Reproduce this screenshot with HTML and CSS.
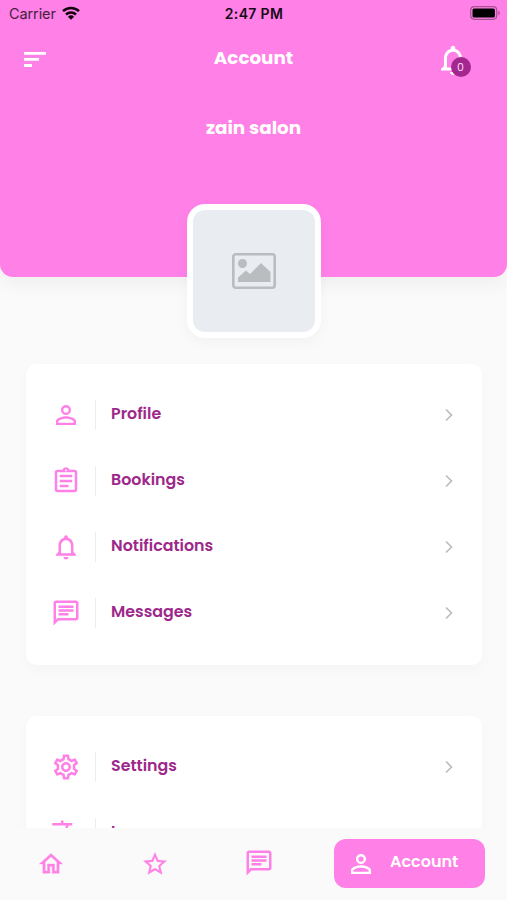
FILE: index.html
```html
<!DOCTYPE html>
<html lang="en">
<head>
<meta charset="utf-8">
<title>Account</title>
<link rel="stylesheet" href="styles.css">
</head>
<body>
<svg class="defs" aria-hidden="true">
  <symbol id="person" viewBox="0 0 24 24"><path d="M12 5.9a2.1 2.1 0 1 1 0 4.2 2.1 2.1 0 0 1 0-4.2m0 9c2.97 0 6.1 1.46 6.1 2.1v1.1H5.9V17c0-.64 3.13-2.1 6.1-2.1M12 4C9.79 4 8 5.79 8 8s1.79 4 4 4 4-1.79 4-4-1.79-4-4-4zm0 9c-2.67 0-8 1.34-8 4v3h16v-3c0-2.66-5.33-4-8-4z"/></symbol>
  <symbol id="clipboard" viewBox="0 0 24 24"><path d="M7 15h7v2H7zm0-4h10v2H7zm0-4h10v2H7zm12-4h-4.18C14.4 1.84 13.3 1 12 1s-2.4.84-2.82 2H5c-1.1 0-2 .9-2 2v14c0 1.1.9 2 2 2h14c1.100 0 2-.9 2-2V5c0-1.100-.9-2-2-2zm-7-.25c.41 0 .75.34.75.75s-.34.75-.75.75-.75-.34-.75-.75.34-.75.75-.75zM19 19H5V5h14v14z"/></symbol>
  <symbol id="bell" viewBox="0 0 24 24"><path d="M12 22c1.100 0 2-.9 2-2h-4c0 1.100.9 2 2 2zm6-6v-5c0-3.070-1.630-5.640-4.500-6.320V4c0-.83-.67-1.500-1.500-1.500s-1.500.67-1.500 1.500v.68C7.640 5.360 6 7.920 6 11v5l-2 2v1h16v-1l-2-2zm-2 1H8v-6c0-2.480 1.510-4.500 4-4.500s4 2.020 4 4.500v6z"/></symbol>
  <symbol id="chat" viewBox="0 0 24 24"><path d="M4 4h16v12H5.170L4 17.170V4m0-2c-1.100 0-1.990.9-1.990 2L2 22l4-4h14c1.100 0 2-.9 2-2V4c0-1.100-.9-2-2-2H4zm2 10h8v2H6v-2zm0-3h12v2H6V9zm0-3h12v2H6V6z"/></symbol>
  <symbol id="gear" viewBox="0 0 24 24"><path d="M19.430 12.980c.04-.32.070-.64.070-.98s-.03-.66-.070-.98l2.110-1.650c.19-.15.240-.42.120-.64l-2-3.460c-.09-.16-.26-.25-.44-.25-.06 0-.12.010-.17.030l-2.490 1c-.52-.4-1.080-.73-1.690-.98l-.38-2.650C14.460 2.180 14.250 2 14 2h-4c-.25 0-.46.18-.49.42l-.38 2.650c-.61.25-1.170.59-1.690.98l-2.490-1c-.06-.02-.12-.03-.18-.03-.17 0-.34.09-.43.25l-2 3.460c-.13.22-.07.49.12.64l2.110 1.650c-.04.32-.07.65-.07.98s.03.66.07.98l-2.110 1.650c-.19.15-.24.42-.12.64l2 3.460c.09.16.26.25.44.25.06 0 .12-.01.17-.03l2.490-1c.52.4 1.080.73 1.690.98l.38 2.650c.03.24.24.42.49.42h4c.25 0 .46-.18.49-.42l.38-2.650c.61-.25 1.170-.59 1.690-.98l2.490 1c.06.02.12.03.18.03.17 0 .34-.09.43-.25l2-3.460c.12-.22.07-.49-.12-.64l-2.110-1.650zm-1.980-1.710c.04.31.05.52.05.73 0 .21-.02.43-.05.73l-.14 1.130.89.7 1.080.84-.7 1.210-1.270-.51-1.040-.42-.9.68c-.43.32-.84.56-1.250.73l-1.060.43-.16 1.130-.2 1.350h-1.400l-.19-1.350-.16-1.130-1.060-.43c-.43-.18-.83-.41-1.230-.71l-.91-.7-1.060.43-1.270.51-.7-1.210 1.080-.84.89-.7-.14-1.130c-.03-.31-.05-.54-.05-.74s.02-.43.05-.73l.14-1.130-.89-.7-1.080-.84.7-1.210 1.270.51 1.040.42.9-.68c.43-.32.84-.56 1.250-.73l1.060-.43.16-1.130.2-1.350h1.390l.19 1.350.16 1.130 1.060.43c.43.18.83.41 1.230.71l.91.7 1.060-.43 1.270-.51.7 1.210-1.070.85-.89.7.14 1.130zM12 8c-2.210 0-4 1.790-4 4s1.790 4 4 4 4-1.790 4-4-1.790-4-4-4zm0 6c-1.100 0-2-.9-2-2s.9-2 2-2 2 .9 2 2-.9 2-2 2z"/></symbol>
  <symbol id="translate" viewBox="0 0 24 24"><path d="M12.870 15.070l-2.540-2.510.03-.03c1.740-1.940 2.980-4.170 3.710-6.530H17V4h-7V2H8v2H1v1.990h11.170C11.500 7.920 10.440 9.750 9 11.350 8.070 10.320 7.300 9.190 6.690 8h-2c.73 1.630 1.730 3.170 2.980 4.560l-5.090 5.020L4 19l5-5 3.110 3.110.76-2.040zM18.500 10h-2L12 22h2l1.120-3h4.750L21 22h2l-4.500-12zm-2.620 7l1.620-4.330L19.120 17h-3.240z"/></symbol>
  <symbol id="home" viewBox="0 0 24 24"><path d="M12 5.690l5 4.500V18h-2v-6H9v6H7v-7.810l5-4.500M12 3L2 12h3v8h6v-6h2v6h6v-8h3L12 3z"/></symbol>
  <symbol id="star" viewBox="0 0 24 24"><path d="M22 9.240l-7.190-.62L12 2 9.190 8.630 2 9.240l5.460 4.730L5.820 21 12 17.270 18.180 21l-1.630-7.030L22 9.240zM12 15.400l-3.760 2.270 1-4.280-3.320-2.880 4.380-.38L12 6.100l1.710 4.040 4.380.38-3.320 2.880 1 4.280L12 15.400z"/></symbol>
  <symbol id="chevron" viewBox="0 0 8 14"><path d="M1 1.500 6.500 7 1 12.500" fill="none" stroke="currentColor" stroke-width="1.700"/></symbol>
</svg>
<div class="screen">
  <header class="hero">
    <div class="status">
      <div class="carrier"><span>Carrier</span>
        <svg class="wifi" viewBox="0 0 18 14"><path d="M1 5.200a11.500 11.500 0 0 1 16 0M4 8.500a7.200 7.200 0 0 1 10 0" fill="none" stroke="currentColor" stroke-width="2.500"/><path d="M9 13.700 5.900 10.700a4.500 4.500 0 0 1 6.200 0z" fill="currentColor"/></svg>
      </div>
      <span class="time">2:47 PM</span>
      <svg class="battery" viewBox="0 0 31 14"><rect x=".7" y=".7" width="26" height="12.600" rx="3.500" fill="none" stroke="#a65390" stroke-width="1.200"/><rect x="2.500" y="2.500" width="22.400" height="9" rx="1.500"/><path d="M28.300 4.800v4.400c2-.8 2-3.600 0-4.400z" fill="#a65390"/></svg>
    </div>
    <div class="bar">
      <svg class="menu" viewBox="0 0 22 15"><path d="M0 0h22v2.800H0zM0 6h15v2.800H0zM0 12.100h8v2.800H0z"/></svg>
      <h1 class="title">Account</h1>
      <div class="alerts"><svg><use href="#bell"/></svg><span class="badge">0</span></div>
    </div>
    <h2 class="name">zain salon</h2>
    <div class="avatar"><div class="photo">
      <svg viewBox="0 0 44 36"><rect x="1.300" y="1.300" width="41.400" height="33.400" rx="2.500" fill="none" stroke="#b9bdbf" stroke-width="2.600"/><circle cx="10.500" cy="10.500" r="4.500" fill="#b9bdbf"/><path d="M6 29v-4.500l8-7 4 3.500 11-11 9.500 9V29z" fill="#b9bdbf"/></svg>
    </div></div>
  </header>
  <main class="content">
    <section class="card">
      <div class="row"><svg class="icon"><use href="#person"/></svg><span class="label">Profile</span><svg class="chev"><use href="#chevron"/></svg></div>
      <div class="row"><svg class="icon"><use href="#clipboard"/></svg><span class="label">Bookings</span><svg class="chev"><use href="#chevron"/></svg></div>
      <div class="row"><svg class="icon"><use href="#bell"/></svg><span class="label">Notifications</span><svg class="chev"><use href="#chevron"/></svg></div>
      <div class="row"><svg class="icon"><use href="#chat"/></svg><span class="label">Messages</span><svg class="chev"><use href="#chevron"/></svg></div>
    </section>
    <section class="card">
      <div class="row"><svg class="icon"><use href="#gear"/></svg><span class="label">Settings</span><svg class="chev"><use href="#chevron"/></svg></div>
      <div class="row"><svg class="icon"><use href="#translate"/></svg><span class="label">Languages</span></div>
    </section>
  </main>
  <nav class="tabs">
    <svg class="tab home"><use href="#home"/></svg>
    <svg class="tab star"><use href="#star"/></svg>
    <svg class="tab"><use href="#chat"/></svg>
    <div class="active"><svg class="tab"><use href="#person"/></svg><span>Account</span></div>
  </nav>
</div>
</body>
</html>
```

FILE: styles.css
```css
* { box-sizing: border-box; }
body { margin: 0; font-family: Poppins, Inter, sans-serif; }
svg { display: block; fill: currentColor; flex: none; }
.defs { position: absolute; width: 0; height: 0; }
.screen { display: flex; flex-direction: column; width: 507px; height: 900px; overflow: hidden; background: #fafafa; }
.hero { flex: none; height: 277px; background: #ff80e6; border-radius: 0 0 13px 13px; box-shadow: 0 8px 18px rgba(0, 0, 0, .045); color: #fff; display: flex; flex-direction: column; align-items: center; }
.status { flex: none; width: 100%; height: 28px; display: grid; grid-template-columns: 1fr auto 1fr; align-items: center; padding: 0 6px 2px 9px; color: #170b15; font-family: Inter, sans-serif; font-size: 14.500px; }
.carrier { display: flex; align-items: center; gap: 6px; color: #451f3d; letter-spacing: -.1px; }
.wifi { width: 18px; height: 14px; color: #120510; }
.time { margin-right: 2px; font-weight: 600; font-size: 14px; letter-spacing: .35px; }
.battery { width: 31px; height: 14px; justify-self: end; color: #000; }
.bar { flex: none; width: 100%; height: 64px; display: grid; grid-template-columns: 1fr auto 1fr; align-items: center; padding: 0 36px 0 24px; }
.menu { width: 22px; height: 15px; margin-top: -1px; }
.title, .name { flex: none; margin: 0; font-size: 18.300px; line-height: 24px; font-weight: 700; }
.title { margin: -4px -12px 0 0; }
.alerts { position: relative; justify-self: end; width: 36px; height: 36px; }
.alerts svg { width: 36px; height: 36px; }
.badge { position: absolute; left: 15.500px; top: 15px; width: 20px; height: 20px; border-radius: 50%; background: #a3278f; font-size: 11px; line-height: 20px; text-align: center; color: #fbd8f5; }
.name { margin-top: 24px; }
.avatar { flex: none; width: 134px; height: 134px; margin-top: 64px; padding: 6px; border-radius: 18px; background: #fff; box-shadow: 0 5px 14px rgba(0, 0, 0, .035); }
.photo { height: 122px; border-radius: 12px; background: #e9edf1; display: flex; align-items: center; justify-content: center; }
.photo svg { width: 44px; height: 36px; }
.content { flex: 1; min-height: 0; overflow: hidden; padding: 87px 25px 0 26px; }
.card { background: #fff; border-radius: 10px; padding: 18px 29px 19px 25px; margin-bottom: 51px; box-shadow: 0 5px 14px rgba(0, 0, 0, .025); }
.row { height: 66px; display: flex; align-items: center; }
.icon { width: 30px; height: 30px; color: #ff80e6; }
.label { margin-left: 14px; padding-left: 15px; border-left: 1px solid #ededed; height: 30px; line-height: 28px; font-size: 15.850px; font-weight: 600; color: #9d288b; flex: 1; }
.chev { width: 8px; height: 14px; color: #bdbdbd; }
.tabs { flex: none; position: relative; height: 72px; background: #fafafa; color: #ff80e6; display: flex; align-items: center; padding: 0 22px 2px 36px; }
.tab { width: 30px; height: 30px; }
.tab.home, .tab.star { width: 28px; height: 28px; }
.tab.home { margin: 1px 0 0 1px; stroke: currentColor; stroke-width: .3px; }
.tab.star { margin: 1px 0 0 76px; stroke: currentColor; stroke-width: .2px; }
.star + .tab { margin-left: 75px; }
.active { margin-left: auto; width: 151px; height: 49px; border-radius: 12px; background: #ff80e6; color: #fff; display: flex; align-items: center; padding-left: 12px; }
.active .tab { margin-top: 1px; }
.active span { margin: -3px 0 0 14px; font-size: 16px; font-weight: 600; }
```
